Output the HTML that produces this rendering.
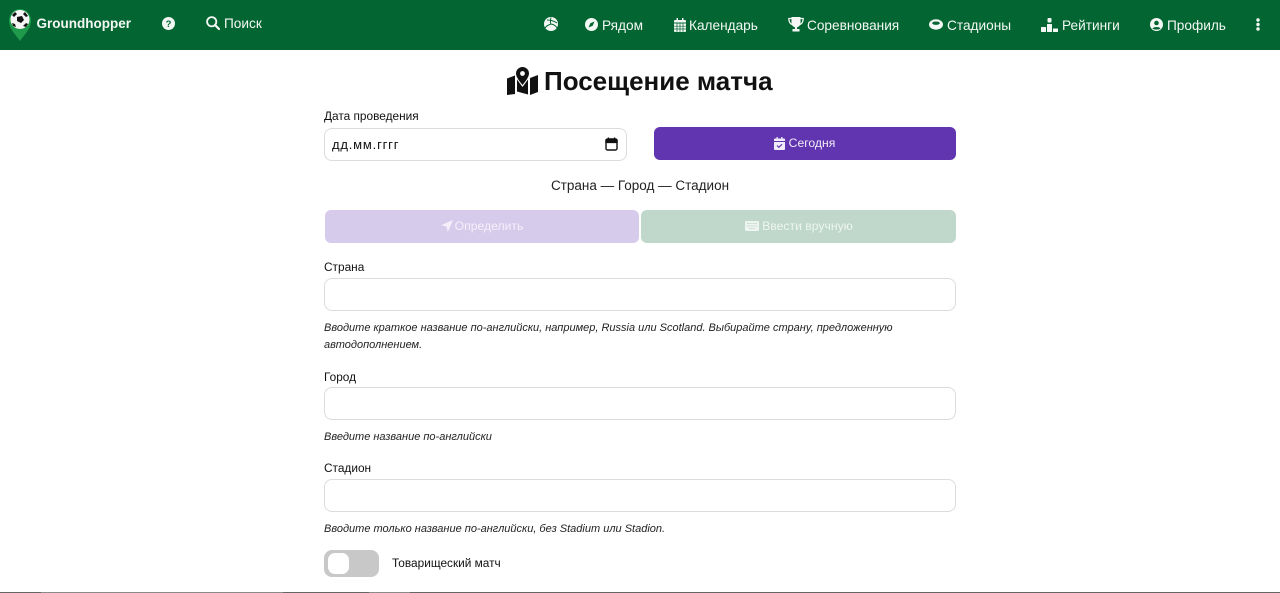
<!DOCTYPE html>
<html lang="ru"><head><meta charset="utf-8"><title>Посещение матча</title>
<style>
html,body{margin:0;padding:0;width:1280px;height:593px;overflow:hidden;background:#fff;font-family:"Liberation Sans",sans-serif;color:#111}
.a{position:absolute;white-space:nowrap}
.nav{position:absolute;left:0;top:0;width:1280px;height:50px;background:#036632}
.n{position:absolute;top:16.500px;font-size:13.650px;line-height:18px;color:#f4f8f5;white-space:nowrap}
svg{position:absolute;display:block}
.l{position:absolute;left:324px;font-size:11.850px;line-height:16px;color:#111;white-space:nowrap}
.i{position:absolute;left:324px;width:630px;height:31px;border:1.500px solid #dcdcdc;border-radius:8px;background:#fff}
.h{position:absolute;left:324px;font-size:11px;font-style:italic;line-height:18px;color:#222;white-space:nowrap}
.b{position:absolute;border-radius:6px;color:#fff;font-size:12.200px;line-height:33px;text-align:center}
</style></head><body>
<div class="nav">
<svg style="left:8px;top:8px" width="24" height="34" viewBox="0 0 24 34"><path d="M12 33C8 27 1 21 1 12.500A11 11.500 0 0 1 23 12.500C23 21 16 27 12 33Z" fill="#1e9a4a"/><circle cx="12" cy="11.500" r="9.500" fill="#f5f5f5"/><path d="M9 9l5-1 2 4-3 3-4-2zM4 7l3-3 2 2-3 3zM17 4l3 4-2 1-3-3zM4 15l3 1 1 3-3-1zM15 18l3-3 2 1-2 3z" fill="#111"/></svg>
<div class="n" style="left:36.500px;top:15px;font-weight:bold;font-size:13.500px">Groundhopper</div>
<svg style="left:162px;top:17px" width="13" height="13" viewBox="0 0 13 13"><circle cx="6.500" cy="6.500" r="6.500" fill="#f3f7f4"/><text x="6.500" y="10" text-anchor="middle" font-size="9.500" font-weight="bold" font-family="Liberation Sans" fill="#036632">?</text></svg>
<svg style="left:206px;top:16px" width="14" height="14" viewBox="0 0 14 14"><circle cx="5.700" cy="5.700" r="4.600" fill="none" stroke="#f4f8f5" stroke-width="1.800"/><path d="M9 9l4 4" stroke="#f4f8f5" stroke-width="2.200" stroke-linecap="round"/></svg>
<div class="n" style="left:224px;top:14.500px">Поиск</div>
<svg style="left:544px;top:17px" width="14" height="14" viewBox="0 0 14 14"><circle cx="7" cy="7" r="7" fill="#f4f8f5"/><path d="M7 0.500C6 4 6.500 7 7 7M7 7C4 8 2 9.500 1 11M7 7C10 7.500 12 9 13 11M3 3C6 3 10 4 13 6" stroke="#036632" stroke-width="1" fill="none"/></svg>
<svg style="left:585px;top:18px" width="13" height="13" viewBox="0 0 13 13"><circle cx="6.500" cy="6.500" r="6.500" fill="#f4f8f5"/><path d="M9.500 3.500L7.700 7.700 3.500 9.500 5.300 5.300Z" fill="#036632"/></svg>
<div class="n" style="left:602px">Рядом</div>
<svg style="left:674px;top:18px" width="12" height="14" viewBox="0 0 12 14"><path d="M2.500 0h1.500v2h4V0h1.500v2H11a1 1 0 0 1 1 1v1.500H0V3a1 1 0 0 1 1-1h1.500z" fill="#f4f8f5"/><path d="M0 5.500h12V13a1 1 0 0 1-1 1H1a1 1 0 0 1-1-1z" fill="#f4f8f5"/><path d="M3 5.500v8.500M6 5.500v8.500M9 5.500v8.500M0 8.200h12M0 11h12" stroke="#036632" stroke-width=".7"/></svg>
<div class="n" style="left:689px">Календарь</div>
<svg style="left:788px;top:17px" width="16" height="15" viewBox="0 0 16 15"><path d="M3.500 0h9v6a4.500 4.500 0 0 1-9 0z" fill="#f4f8f5"/><path d="M3.500 1.500H.8C.8 5 2 7 5 8M12.500 1.500h2.700C15.200 5 14 7 11 8" fill="none" stroke="#f4f8f5" stroke-width="1.300"/><path d="M7 9.500h2V12h2.500v2.500h-7V12H7z" fill="#f4f8f5"/></svg>
<div class="n" style="left:807px">Соревнования</div>
<svg style="left:929px;top:19px" width="14" height="11" viewBox="0 0 14 11"><ellipse cx="7" cy="5.500" rx="7" ry="5.200" fill="#f4f8f5"/><ellipse cx="7" cy="4.200" rx="3.800" ry="1.700" fill="#036632"/></svg>
<div class="n" style="left:947px">Стадионы</div>
<svg style="left:1041px;top:18px" width="17" height="14" viewBox="0 0 17 14"><rect x="6.500" y="0" width="4" height="4.500" rx="1" fill="#f4f8f5"/><rect x="0" y="9" width="5" height="5" rx=".5" fill="#f4f8f5"/><rect x="6" y="6" width="5" height="8" rx=".5" fill="#f4f8f5"/><rect x="12" y="10.500" width="5" height="3.500" rx=".5" fill="#f4f8f5"/></svg>
<div class="n" style="left:1062px">Рейтинги</div>
<svg style="left:1150px;top:18px" width="13" height="13" viewBox="0 0 13 13"><circle cx="6.500" cy="6.500" r="6.500" fill="#f4f8f5"/><circle cx="6.500" cy="5" r="2.300" fill="#036632"/><path d="M2.500 10.500C3.500 8.500 9.500 8.500 10.500 10.500 9 12 4 12 2.500 10.500Z" fill="#036632"/></svg>
<div class="n" style="left:1167px">Профиль</div>
<svg style="left:1256px;top:18px" width="4" height="13" viewBox="0 0 4 13"><circle cx="2" cy="2" r="1.700" fill="#f4f8f5"/><circle cx="2" cy="6.500" r="1.700" fill="#f4f8f5"/><circle cx="2" cy="11" r="1.700" fill="#f4f8f5"/></svg>
</div>

<svg style="left:507px;top:67px" width="31" height="28" viewBox="0 0 31 28"><path d="M15.500 0a6.500 6.500 0 0 1 6.500 6.500C22 10 18 15 15.500 18 13 15 9 10 9 6.500A6.500 6.500 0 0 1 15.500 0Z" fill="#111"/><circle cx="15.500" cy="6.500" r="2.400" fill="#fff"/><path d="M0 11.500L8 8.500V27L0 28ZM10 12.500L15.500 20 21 12.500V27.500L10 24.500ZM23 11L31 8V25L23 28Z" fill="#111"/></svg>
<div class="a" style="left:544px;top:65.500px;font-size:26px;line-height:30px;font-weight:bold;color:#111">Посещение матча</div>

<div class="l" style="top:108px">Дата проведения</div>
<div class="i" style="top:128px;width:301px"></div>
<div class="a" style="left:332px;top:136.500px;font-size:13px;line-height:16px;letter-spacing:.8px;color:#111">дд.мм.гггг</div>
<svg style="left:605px;top:137px" width="13" height="14" viewBox="0 0 13 14"><rect x="1" y="2" width="11" height="11" rx="1.500" fill="none" stroke="#111" stroke-width="1.400"/><path d="M1 3h11v2.500H1zM3.500 0.500v2M9.500 0.500v2" stroke="#111" stroke-width="1.300" fill="#111"/></svg>
<div class="b" style="left:654px;top:127px;width:302px;height:33px;background:#6135b0;color:#f1ecf9">
<span style="display:inline-block;width:14px"></span>Сегодня</div>
<svg style="left:774px;top:137px" width="11" height="13" viewBox="0 0 11 13"><path d="M2.500 0h1.300v1.500h3.400V0h1.300v1.500H10a1 1 0 0 1 1 1V4H0V2.500a1 1 0 0 1 1-1h1.500zM0 5h11v7a1 1 0 0 1-1 1H1a1 1 0 0 1-1-1z" fill="#f1ecf9"/><path d="M3 8.500l1.800 1.800 3.200-3" fill="none" stroke="#6135b0" stroke-width="1.200"/></svg>

<div class="a" style="left:324px;width:632px;top:177px;text-align:center;font-size:13.500px;line-height:18px;color:#222">Страна — Город — Стадион</div>

<div class="b" style="left:325px;top:210px;width:314px;height:33px;background:#d7cbec;color:#f4f0fa"><span style="display:inline-block;width:14px"></span>Определить</div>
<svg style="left:441px;top:220px" width="12" height="12" viewBox="0 0 12 12"><path d="M12 0L6.800 12 5.500 6.500 0 5.200Z" fill="#f4f0fa"/></svg>
<div class="b" style="left:641px;top:210px;width:315px;height:33px;background:#c0d8cb;color:#eef5f1"><span style="display:inline-block;width:18px"></span>Ввести вручную</div>
<svg style="left:745px;top:221px" width="14" height="10" viewBox="0 0 14 10"><rect width="14" height="10" rx="1.200" fill="#eef5f1"/><path d="M2 2.500h10M2 5h10M4 7.500h6" stroke="#c0d8cb" stroke-width="1" stroke-dasharray="1.200 .6"/></svg>

<div class="l" style="top:259px">Страна</div>
<div class="i" style="top:278px"></div>
<div class="h" style="top:318.500px">Вводите краткое название по-английски, например, Russia или Scotland. Выбирайте страну, предложенную</div>
<div class="h" style="top:336px">автодополнением.</div>

<div class="l" style="top:369px">Город</div>
<div class="i" style="top:387px"></div>
<div class="h" style="top:427.500px">Введите название по-английски</div>

<div class="l" style="top:460px">Стадион</div>
<div class="i" style="top:479px"></div>
<div class="h" style="top:519.500px">Вводите только название по-английски, без Stadium или Stadion.</div>

<div class="a" style="left:324px;top:550px;width:55px;height:27px;border-radius:8px;background:#c8c8c8"></div>
<div class="a" style="left:328px;top:553px;width:21px;height:21px;border-radius:7px;background:#fff"></div>
<div class="l" style="left:392px;top:555px">Товарищеский матч</div>

<div class="a" style="left:0;top:592px;width:1280px;height:1px;background:#666"></div>
<div class="a" style="left:41px;top:592px;width:242px;height:1px;background:#8a8a8a"></div>
<div class="a" style="left:369px;top:592px;width:41px;height:1px;background:#8a8a8a"></div>
</body></html>
